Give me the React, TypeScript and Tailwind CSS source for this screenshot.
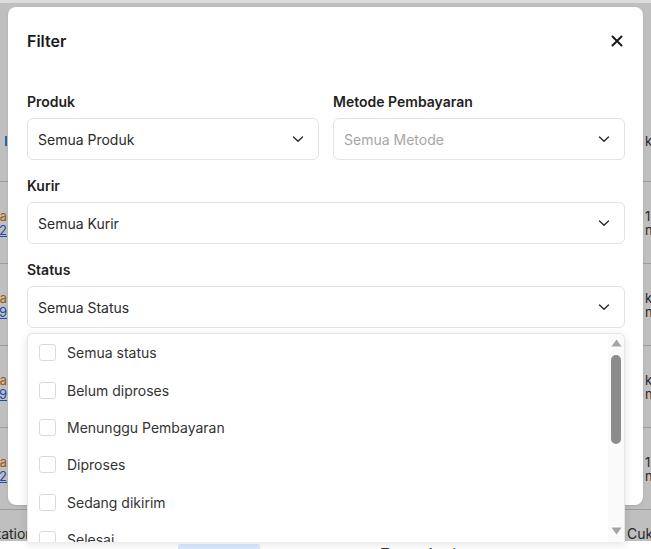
import React from "react";

const font = { fontFamily: "Inter, 'Noto Sans', sans-serif" };

function Chevron() {
  return (
    <svg width="12" height="8" viewBox="0 0 12 8" fill="none" className="shrink-0">
      <path d="M1.5 2 L6 6.3 L10.5 2" stroke="#2a2a2a" strokeWidth="1.4" strokeLinecap="round" strokeLinejoin="round" />
    </svg>
  );
}

function Select({ value, placeholder }: { value: string; placeholder?: boolean }) {
  return (
    <div className="flex h-[42px] w-full items-center justify-between rounded-[6px] border border-[#e3e3e3] bg-white pl-[10px] pr-[14px]">
      <span className={placeholder ? "text-[14px] text-[#a6a6a6]" : "text-[14px] text-[#2b2b2b]"}>{value}</span>
      <Chevron />
    </div>
  );
}

function Field({ label, children }: { label: string; children: React.ReactNode }) {
  return (
    <div className="flex flex-col">
      <div className="mb-[6px] text-[14px] font-semibold leading-[20px] text-[#1f1f1f]">{label}</div>
      {children}
    </div>
  );
}

const statuses = [
  "Semua status",
  "Belum diproses",
  "Menunggu Pembayaran",
  "Diproses",
  "Sedang dikirim",
  "Selesai",
];

const bgRows = [
  { l1: "", l2: "", r1: "k", r2: "" },
  { l1: "Jakarta", l2: "0812", r1: "1", r2: "n" },
  { l1: "Jakarta", l2: "0819", r1: "k", r2: "n" },
  { l1: "Jakarta", l2: "0819", r1: "k", r2: "n" },
  { l1: "Jakarta", l2: "0812", r1: "1", r2: "n" },
];

export default function App() {
  return (
    <div className="relative h-[549px] w-[651px] overflow-hidden bg-white" style={font}>
      {/* background page */}
      <div className="flex flex-col pt-[100px] text-[13px] leading-[14px] text-[#333]">
        {bgRows.map((r, i) => (
          <div key={i} className="flex h-[82px] items-center justify-between border-b border-[#d0d0d0]">
            <div className="-ml-[50px] flex w-[57px] flex-col items-end">
              {i === 0 ? (
                <span className="h-[10px] w-[2px] bg-[#3b82f6]" />
              ) : (
                <>
                  <span className="text-[#d97706]">{r.l1}</span>
                  <span className="text-[#2563eb] underline">{r.l2}</span>
                </>
              )}
            </div>
            <div className="-mr-[40px] flex w-[46px] flex-col items-start">
              <span>{r.r1}</span>
              <span>{r.r2}</span>
            </div>
          </div>
        ))}
        <div className="flex h-[60px] items-start text-[14px] leading-[16px]">
          <div className="-ml-[63px] mt-[16px] w-[170px] shrink-0 whitespace-nowrap">Transportation. COD</div>
          <div className="ml-[71px] mt-[34px] rounded-[3px] bg-[#dbeafe] px-[12px] pt-[3px] text-[#2563eb]">Diproses</div>
          <div className="ml-[120px] mt-[36px]">Tester Apple</div>
          <div className="ml-auto -mr-[8px] mt-[16px] w-[32px]">Cuk</div>
        </div>
      </div>

      {/* overlay */}
      <div className="absolute left-0 right-0 top-0 h-[541px] bg-black/25" />
      <div className="absolute left-0 right-0 top-0 h-[3px] bg-[#dcdcdc]" />

      {/* modal */}
      <div className="absolute left-[8px] top-[7px] flex h-[498px] w-[635px] flex-col rounded-[8px] bg-white pl-[19px] pr-[18px] pt-[22px] shadow-sm">
        <div className="flex items-center justify-between">
          <div className="text-[16px] font-semibold leading-[24px] text-[#1a1a1a]">Filter</div>
          <svg width="12" height="12" viewBox="0 0 12 12" className="mr-[2px]">
            <path d="M1.5 1.5 L10.5 10.5 M10.5 1.5 L1.5 10.5" stroke="#1a1a1a" strokeWidth="2" strokeLinecap="round" />
          </svg>
        </div>

        <div className="mt-[39px] flex flex-col gap-[16px]">
          <div className="grid grid-cols-2 gap-[14px]">
            <Field label="Produk">
              <Select value="Semua Produk" />
            </Field>
            <Field label="Metode Pembayaran">
              <Select value="Semua Metode" placeholder />
            </Field>
          </div>
          <Field label="Kurir">
            <Select value="Semua Kurir" />
          </Field>
          <div className="relative">
            <Field label="Status">
              <Select value="Semua Status" />
            </Field>
            {/* dropdown */}
            <div className="absolute left-0 right-0 top-full z-10 mt-[5px] flex h-[209px] overflow-hidden rounded-t-[6px] border border-b-0 border-[#e6e6e6] bg-white shadow-[0_2px_8px_rgba(0,0,0,0.12)]">
              <div className="flex flex-1 flex-col">
                {statuses.map((s) => (
                  <div key={s} className="flex h-[37.4px] shrink-0 items-center pl-[11px]">
                    <span className="h-[17px] w-[17px] shrink-0 rounded-[3px] border border-[#dadada] bg-white" />
                    <span className="ml-[11px] text-[14px] text-[#333]">{s}</span>
                  </div>
                ))}
              </div>
              <div className="flex w-[16px] flex-col items-center bg-[#fafafa] pt-[5px]">
                <svg width="11" height="8" viewBox="0 0 11 8">
                  <path d="M5.5 0.5 L10.5 7.5 L0.5 7.5 Z" fill="#a3a3a3" />
                </svg>
                <div className="mt-[8px] h-[89px] w-[10px] rounded-full bg-[#8c8c8c]" />
                <div className="flex-1" />
                <svg width="11" height="8" viewBox="0 0 11 8" className="mb-[7px]">
                  <path d="M0.5 0.5 L10.5 0.5 L5.5 7.5 Z" fill="#a3a3a3" />
                </svg>
              </div>
            </div>
          </div>
        </div>
      </div>
    </div>
  );
}
